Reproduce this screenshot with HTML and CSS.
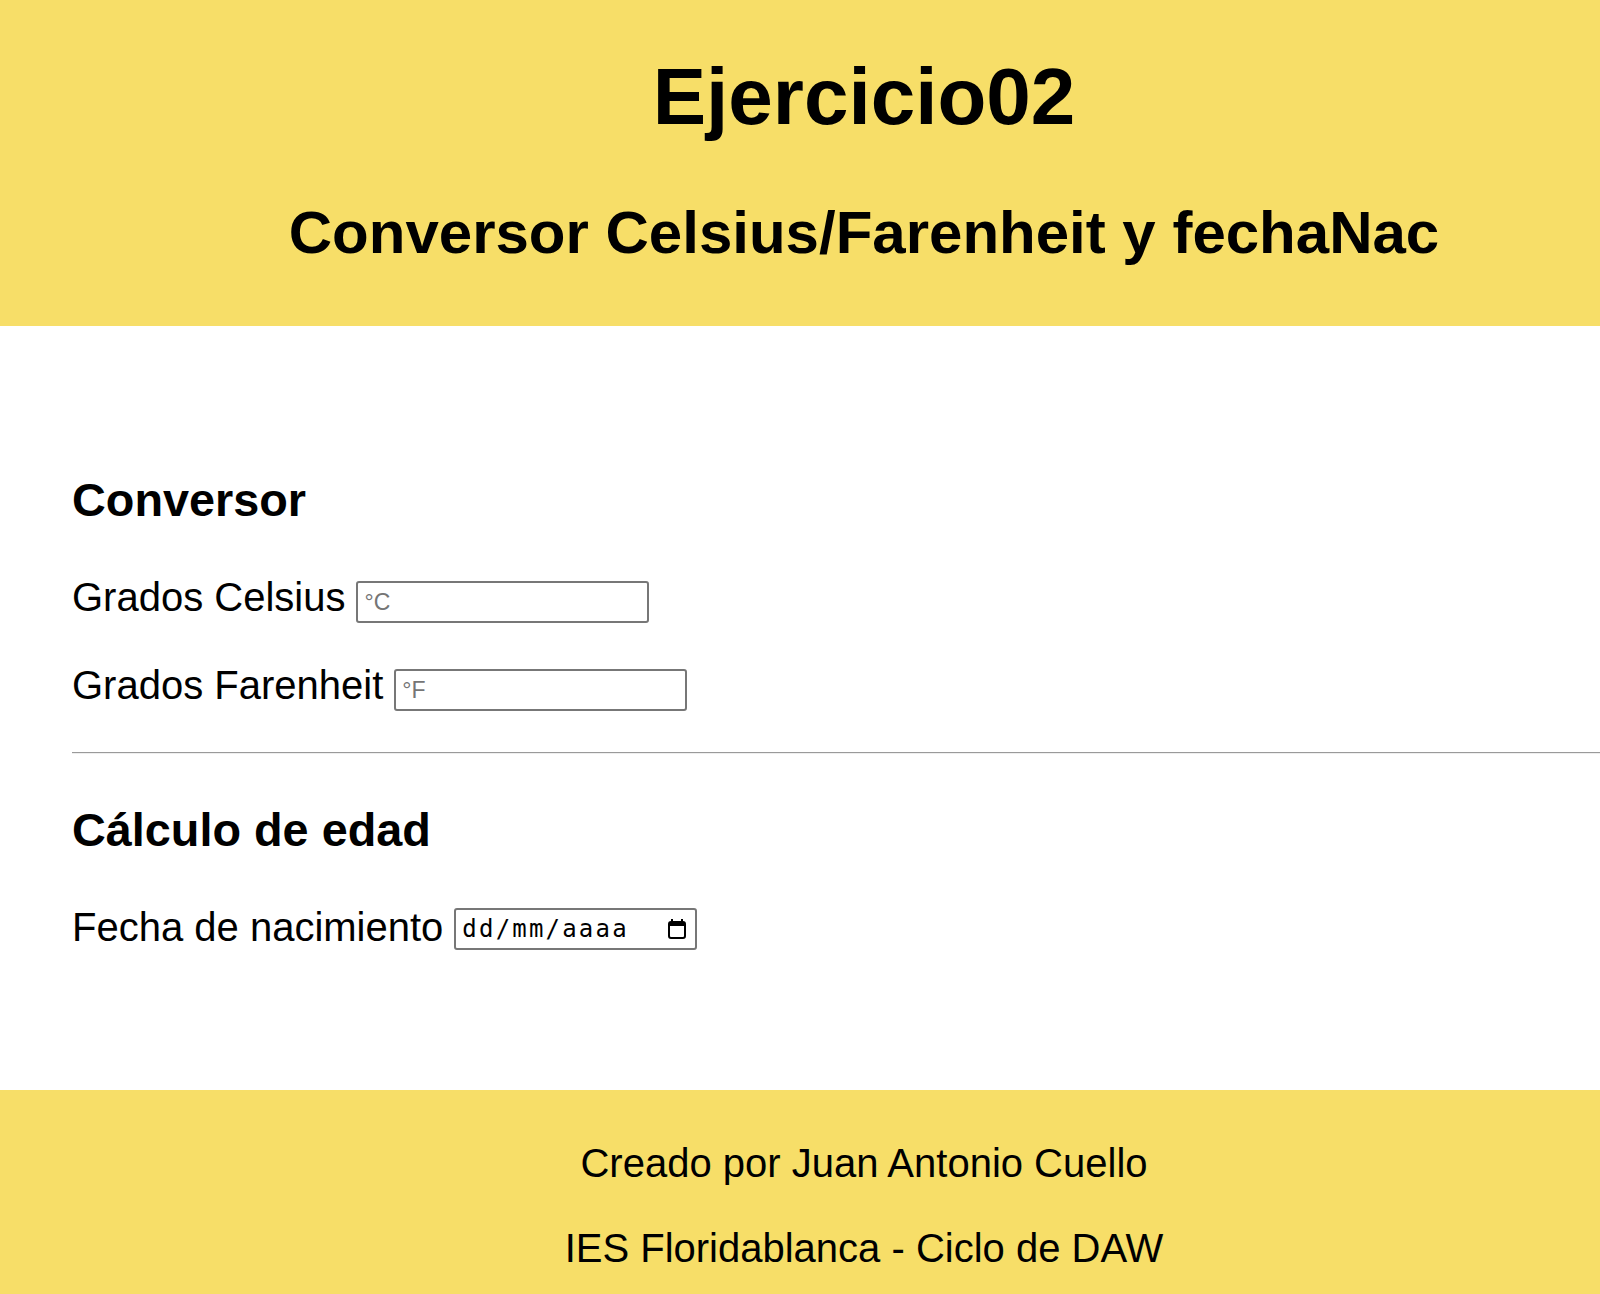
FILE: index.html
```html
<!DOCTYPE html>
<html lang="es">
<head>
<meta charset="utf-8">
<title>Ejercicio02</title>
<link rel="stylesheet" href="styles.css">
</head>
<body>
<header class="site-header">
  <h1 class="title">Ejercicio02</h1>
  <h2 class="subtitle">Conversor Celsius/Farenheit y fechaNac</h2>
</header>
<main class="content">
  <h3 class="section-title">Conversor</h3>
  <div class="field field--after-title">
    <label class="field-label" for="celsius">Grados Celsius</label>
    <input class="text-input" id="celsius" type="text" placeholder="°C">
  </div>
  <div class="field field--next">
    <label class="field-label" for="farenheit">Grados Farenheit</label>
    <input class="text-input" id="farenheit" type="text" placeholder="°F">
  </div>
  <hr class="divider">
  <h3 class="section-title section-title--second">Cálculo de edad</h3>
  <div class="field field--after-title2">
    <label class="field-label" for="fecha">Fecha de nacimiento</label>
    <div class="date-input" id="fecha">
      <span class="date-text">dd/mm/aaaa</span>
      <svg class="date-icon" width="18" height="20" viewBox="0 0 18 20" aria-hidden="true">
        <rect x="3" y="0" width="2" height="4" fill="#000"/>
        <rect x="13" y="0" width="2" height="4" fill="#000"/>
        <rect x="1" y="3" width="16" height="16" rx="2" fill="none" stroke="#000" stroke-width="2"/>
        <rect x="1" y="3" width="16" height="4" fill="#000"/>
      </svg>
    </div>
  </div>
</main>
<footer class="site-footer">
  <p class="footer-line">Creado por Juan Antonio Cuello</p>
  <p class="footer-line footer-line--second">IES Floridablanca - Ciclo de DAW</p>
</footer>
</body>
</html>
```

FILE: styles.css
```css
html, body {
  margin: 0;
  padding: 0;
}

body {
  font-family: "Liberation Sans", Arial, Helvetica, sans-serif;
  font-size: 40px;
  color: #000;
  background: #fff;
  overflow: hidden;
}

.site-header {
  background: #f7de68;
  padding: 51px 0 59px 128px;
  text-align: center;
}

.title {
  margin: 0;
  font-size: 80px;
  line-height: 92px;
  font-weight: bold;
}

.subtitle {
  margin: 55px 0 0;
  font-size: 60px;
  line-height: 69px;
  font-weight: bold;
}

.content {
  display: flex;
  flex-direction: column;
  align-items: flex-start;
  padding: 148px 0 140px 72px;
}

.section-title {
  margin: 0;
  font-size: 46.8px;
  line-height: 53px;
  font-weight: bold;
}

.section-title--second {
  margin-top: 50px;
}

.field {
  display: flex;
  align-items: flex-start;
  gap: 11px;
  height: 46px;
}

.field--after-title {
  margin-top: 47px;
}

.field--next {
  margin-top: 42px;
}

.field--after-title2 {
  margin-top: 47px;
}

.field-label {
  line-height: 46px;
  white-space: nowrap;
}

.text-input {
  box-sizing: border-box;
  width: 293px;
  height: 42px;
  margin: 7px 0 0;
  padding: 0 6px;
  border: 2px solid #777;
  border-radius: 3px;
  background: #fff;
  font-family: "Liberation Sans", Arial, sans-serif;
  font-size: 23px;
  color: #000;
  outline: none;
}

.text-input::placeholder {
  color: #757575;
}

.divider {
  align-self: stretch;
  margin: 44px 0 0;
  height: 0;
  border: 0;
  border-top: 1px solid #9a9a9a;
  border-bottom: 1px solid #eeeeee;
}

.date-input {
  box-sizing: border-box;
  width: 243px;
  height: 42px;
  margin-top: 4px;
  display: flex;
  align-items: center;
  justify-content: space-between;
  padding: 0 9px 0 6px;
  border: 2px solid #777;
  border-radius: 3px;
  background: #fff;
}

.date-text {
  font-family: "DejaVu Sans Mono", "Liberation Mono", monospace;
  font-size: 24px;
  letter-spacing: 2.2px;
  color: #000;
  line-height: 1;
}

.date-icon {
  display: block;
  flex: none;
}

.site-footer {
  background: #f7de68;
  padding: 50px 0 40px 128px;
  text-align: center;
}

.footer-line {
  margin: 0;
  line-height: 46px;
}

.footer-line--second {
  margin-top: 39px;
}
```
